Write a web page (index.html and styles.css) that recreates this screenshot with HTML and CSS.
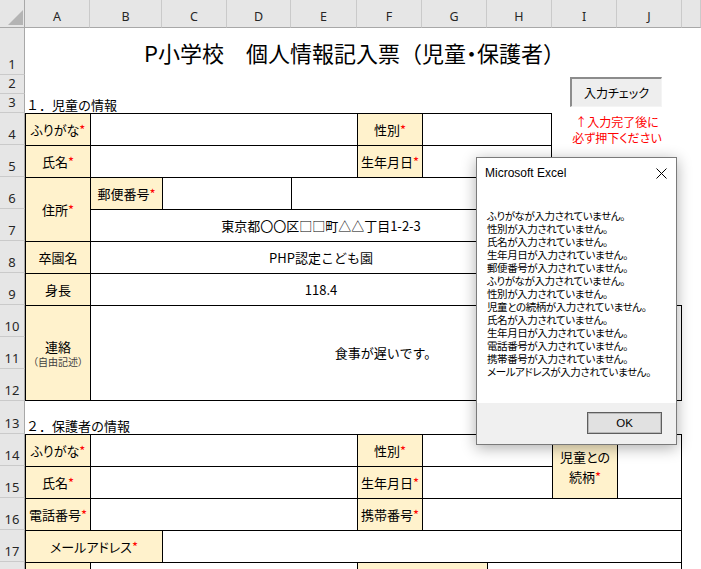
FILE: index.html
```html
<!DOCTYPE html>
<html lang="ja">
<head>
<meta charset="utf-8">
<title>P小学校 個人情報記入票</title>
<link rel="stylesheet" href="styles.css">
</head>
<body>
<div class="sheet">
  <div class="corner"><span class="corner-tri"></span></div>
  <div class="colhead xA">A</div>
  <div class="colhead xB">B</div>
  <div class="colhead xC">C</div>
  <div class="colhead xD">D</div>
  <div class="colhead xE">E</div>
  <div class="colhead xF">F</div>
  <div class="colhead xG">G</div>
  <div class="colhead xH">H</div>
  <div class="colhead xI">I</div>
  <div class="colhead xJ">J</div>
  <div class="colhead xK"></div>

  <div class="rowhead y1">1</div>
  <div class="rowhead y2">2</div>
  <div class="rowhead y3">3</div>
  <div class="rowhead y4">4</div>
  <div class="rowhead y5">5</div>
  <div class="rowhead y6">6</div>
  <div class="rowhead y7">7</div>
  <div class="rowhead y8">8</div>
  <div class="rowhead y9">9</div>
  <div class="rowhead y10">10</div>
  <div class="rowhead y11">11</div>
  <div class="rowhead y12">12</div>
  <div class="rowhead y13">13</div>
  <div class="rowhead y14">14</div>
  <div class="rowhead y15">15</div>
  <div class="rowhead y16">16</div>
  <div class="rowhead y17">17</div>
  <div class="rowhead y18"></div>

  <div class="title y1 xAJ"><span>P小学校　個人情報記入票（児童<span class="dot">・</span>保護者）</span></div>

  <div class="section y3 xAF">１．児童の情報</div>

  <div class="cell label y4 xA"><span>ふりがな<span class="req">*</span></span></div>
  <div class="cell y4 xBE"></div>
  <div class="cell label y4 xF"><span>性別<span class="req">*</span></span></div>
  <div class="cell er y4 xGH"></div>
  <div class="notice y4 xIJ"><span>↑入力完了後に<br>必ず押下ください</span></div>

  <div class="cell label y5 xA"><span>氏名<span class="req">*</span></span></div>
  <div class="cell y5 xBE"></div>
  <div class="cell label y5 xF"><span>生年月日<span class="req">*</span></span></div>
  <div class="cell er y5 xGH"></div>

  <div class="cell label y6-7 xA"><span>住所<span class="req">*</span></span></div>
  <div class="cell label y6 xB"><span>郵便番号<span class="req">*</span></span></div>
  <div class="cell y6 xCD"></div>
  <div class="cell er y6 xEH"></div>
  <div class="cell er y7 xBH">東京都〇〇区□□町△△丁目1-2-3</div>

  <div class="cell label y8 xA">卒園名</div>
  <div class="cell er y8 xBH">PHP認定こども園</div>

  <div class="cell label y9 xA">身長</div>
  <div class="cell er y9 xBH">118.4</div>

  <div class="cell label stack eb y10-12 xA"><span class="main">連絡</span><span class="sub">（自由記述）</span></div>
  <div class="cell er eb y10-12 xBJ">食事が遅いです。</div>

  <div class="section y13 xAF">２．保護者の情報</div>

  <div class="cell label y14 xA"><span>ふりがな<span class="req">*</span></span></div>
  <div class="cell y14 xBE"></div>
  <div class="cell label y14 xF"><span>性別<span class="req">*</span></span></div>
  <div class="cell y14 xGH"></div>
  <div class="cell label two y14-15 xI"><span>児童との<br>続柄<span class="req">*</span></span></div>
  <div class="cell er y14-15 xJ"></div>

  <div class="cell label y15 xA"><span>氏名<span class="req">*</span></span></div>
  <div class="cell y15 xBE"></div>
  <div class="cell label y15 xF"><span>生年月日<span class="req">*</span></span></div>
  <div class="cell y15 xGH"></div>

  <div class="cell label y16 xA"><span>電話番号<span class="req">*</span></span></div>
  <div class="cell y16 xBE"></div>
  <div class="cell label y16 xF"><span>携帯番号<span class="req">*</span></span></div>
  <div class="cell er y16 xGJ"></div>

  <div class="cell label y17 xAB"><span>メールアドレス<span class="req">*</span></span></div>
  <div class="cell er y17 xCJ"></div>

  <div class="cell label y18 xA"></div>
  <div class="cell y18 xBE"></div>
  <div class="cell label y18 xFG"></div>
  <div class="cell er y18 xHJ"></div>
</div>

<button class="check-btn" type="button">入力チェック</button>

<div class="dialog">
  <div class="dlg-title">
    <span class="dlg-name">Microsoft Excel</span>
    <svg class="dlg-close" width="11" height="11" viewBox="0 0 11 11"><path d="M0.5 0.5L10.5 10.5M10.5 0.5L0.5 10.5" stroke="#000" stroke-width="1" fill="none"/></svg>
  </div>
  <div class="dlg-body">
    <div>ふりがなが入力されていません。</div>
    <div>性別が入力されていません。</div>
    <div>氏名が入力されていません。</div>
    <div>生年月日が入力されていません。</div>
    <div>郵便番号が入力されていません。</div>
    <div>ふりがなが入力されていません。</div>
    <div>性別が入力されていません。</div>
    <div>児童との続柄が入力されていません。</div>
    <div>氏名が入力されていません。</div>
    <div>生年月日が入力されていません。</div>
    <div>電話番号が入力されていません。</div>
    <div>携帯番号が入力されていません。</div>
    <div>メールアドレスが入力されていません。</div>
  </div>
  <div class="dlg-foot">
    <button class="dlg-ok" type="button">OK</button>
  </div>
</div>
</body>
</html>
```

FILE: styles.css
```css
* { box-sizing: border-box; }
html, body { margin: 0; padding: 0; }
body {
  width: 701px;
  height: 569px;
  overflow: hidden;
  position: relative;
  background: #fff;
  font-family: "Noto Sans CJK JP", sans-serif;
  color: #000;
}

.sheet {
  display: grid;
  grid-template-columns: 25px 65px 72px 65px 64px 66px 65px 65px 65px 65px 65px 1fr;
  grid-template-rows: 28px 47px 19px 19px repeat(9, 32px) 33px repeat(5, 32px);
  width: 701px;
  height: 569px;
  overflow: hidden;
  font-size: 13px;
}

/* headers */
.corner {
  grid-row: 1;
  grid-column: 1;
  background: #e6e6e6;
  border-right: 1px solid #a8a8a8;
  border-bottom: 1px solid #a8a8a8;
  position: relative;
}
.corner-tri {
  position: absolute;
  right: 1px;
  bottom: 2px;
  width: 0;
  height: 0;
  border-left: 15px solid transparent;
  border-bottom: 15px solid #b4b4b4;
}
.colhead {
  grid-row: 1;
  background: #e6e6e6;
  border-right: 1px solid #cacaca;
  border-bottom: 1px solid #a8a8a8;
  display: flex;
  align-items: center;
  justify-content: center;
  padding-top: 5px;
  font-family: "Noto Sans", sans-serif;
  font-size: 12.5px;
  color: #262626;
}
.rowhead {
  grid-column: 1;
  background: #e6e6e6;
  border-right: 1px solid #a8a8a8;
  border-bottom: 1px solid #cacaca;
  display: flex;
  align-items: flex-end;
  justify-content: center;
  padding-bottom: 2px;
  font-family: "Noto Sans", sans-serif;
  font-size: 13px;
  line-height: 16px;
  color: #262626;
}

/* grid placement: rows */
.y1 { grid-row: 2; }
.y2 { grid-row: 3; }
.y3 { grid-row: 4; }
.y4 { grid-row: 5; }
.y5 { grid-row: 6; }
.y6 { grid-row: 7; }
.y7 { grid-row: 8; }
.y8 { grid-row: 9; }
.y9 { grid-row: 10; }
.y10 { grid-row: 11; }
.y11 { grid-row: 12; }
.y12 { grid-row: 13; }
.y13 { grid-row: 14; }
.y14 { grid-row: 15; }
.y15 { grid-row: 16; }
.y16 { grid-row: 17; }
.y17 { grid-row: 18; }
.y18 { grid-row: 19; }
.y6-7 { grid-row: 7 / 9; }
.y10-12 { grid-row: 11 / 14; }
.y14-15 { grid-row: 15 / 17; }

/* grid placement: columns */
.xA { grid-column: 2; }
.xB { grid-column: 3; }
.xC { grid-column: 4; }
.xD { grid-column: 5; }
.xE { grid-column: 6; }
.xF { grid-column: 7; }
.xG { grid-column: 8; }
.xH { grid-column: 9; }
.xI { grid-column: 10; }
.xJ { grid-column: 11; }
.xK { grid-column: 12; }
.xAB { grid-column: 2 / 4; }
.xAF { grid-column: 2 / 8; }
.xAJ { grid-column: 2 / 12; }
.xBE { grid-column: 3 / 7; }
.xBH { grid-column: 3 / 10; }
.xBJ { grid-column: 3 / 12; }
.xCD { grid-column: 4 / 6; }
.xCJ { grid-column: 4 / 12; }
.xEH { grid-column: 6 / 10; }
.xFG { grid-column: 7 / 9; }
.xGH { grid-column: 8 / 10; }
.xGJ { grid-column: 8 / 12; }
.xHJ { grid-column: 9 / 12; }
.xIJ { grid-column: 10 / 12; }

/* sheet content */
.title {
  display: flex;
  align-items: center;
  justify-content: center;
  padding-left: 2px;
  font-size: 22px;
  white-space: nowrap;
}
.title .dot { font-feature-settings: "palt"; }
.section {
  display: flex;
  align-items: flex-end;
  padding-left: 1px;
  line-height: 16px;
  white-space: nowrap;
}
.cell {
  border-left: 1px solid #000;
  border-top: 1px solid #000;
  display: flex;
  align-items: center;
  justify-content: center;
  text-align: center;
  line-height: 16px;
  white-space: nowrap;
}
.er { border-right: 1px solid #000; }
.eb { border-bottom: 1px solid #000; }
.label {
  background: #fff2cc;
  font-feature-settings: "palt";
}
.req { color: #ff0000; }

.stack { flex-direction: column; }
.stack .main { line-height: 16px; }
.stack .sub {
  font-size: 10px;
  line-height: 13px;
  color: #404040;
}
.two { line-height: 20px; }

.notice {
  display: flex;
  align-items: center;
  justify-content: center;
  text-align: center;
  color: #ff0000;
  font-size: 12px;
  line-height: 16px;
  font-feature-settings: "palt";
  padding-top: 2px;
}

/* floating button */
.check-btn {
  position: absolute;
  left: 570px;
  top: 77px;
  width: 92px;
  height: 30px;
  margin: 0;
  padding: 0;
  background: #eeeeee;
  border-top: 2px solid #8c8c8c;
  border-left: 2px solid #8c8c8c;
  border-right: 1px solid #f4f4f4;
  border-bottom: 1px solid #f4f4f4;
  font-family: "Noto Sans CJK JP", sans-serif;
  font-size: 12px;
  font-feature-settings: "palt";
  color: #000;
}

/* message box */
.dialog {
  position: absolute;
  left: 476px;
  top: 157px;
  width: 201px;
  height: 288px;
  background: #fff;
  border: 1px solid #7a7a7a;
  box-shadow: 0 3px 14px rgba(0, 0, 0, 0.32);
  display: flex;
  flex-direction: column;
}
.dlg-title {
  height: 30px;
  flex: none;
  display: flex;
  align-items: center;
  justify-content: space-between;
  padding: 0 9px 0 8px;
}
.dlg-name {
  font-family: "Liberation Sans", sans-serif;
  font-size: 12px;
  color: #000;
}
.dlg-close { display: block; }
.dlg-body {
  height: 215px;
  flex: none;
  padding: 21px 0 0 10px;
  font-size: 10.5px;
  letter-spacing: -0.4px;
  line-height: 13px;
  font-feature-settings: "palt";
  white-space: nowrap;
  color: #000;
}
.dlg-foot {
  flex: 1;
  background: #f0f0f0;
  display: flex;
  justify-content: flex-end;
  align-items: flex-start;
  padding: 9px 14px 0 0;
}
.dlg-ok {
  width: 75px;
  height: 22px;
  margin: 0;
  padding: 0;
  background: #e1e1e1;
  border: 1px solid #5e5e5e;
  box-shadow: inset 0 0 0 1px #b8b8b8;
  font-family: "Liberation Sans", sans-serif;
  font-size: 11.5px;
  color: #000;
}
```
